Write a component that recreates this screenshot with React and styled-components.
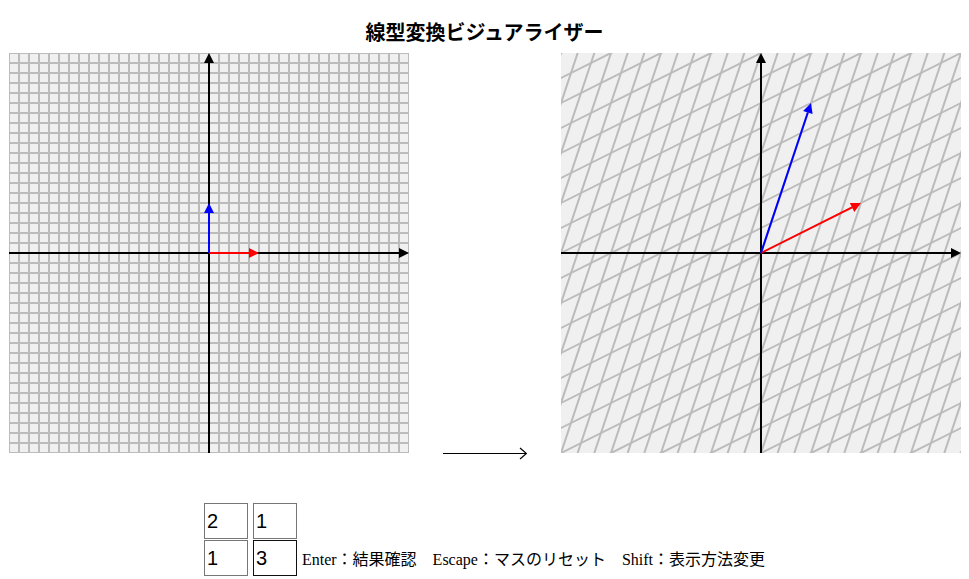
import styled, { createGlobalStyle } from 'styled-components';

const GlobalStyle = createGlobalStyle`
  body {
    margin: 8px;
    font-family: "Liberation Serif", "Noto Sans CJK JP", serif;
    color: #000;
    background: #fff;
  }
`;

const SIZE = 400;
const ORIGIN = SIZE / 2;
const UNIT = 50;
const STEP = 10;
const MATRIX = [[2, 1], [1, 3]];

const Title = styled.h1`
  margin: 10px 0 7px;
  font-family: "Noto Sans CJK JP", sans-serif;
  font-size: 20px;
  line-height: 28px;
  font-weight: 700;
  text-align: center;
`;

const Stage = styled.div`
  display: flex;
  align-items: flex-end;
  padding-left: 1px;
`;

const Plane = styled.svg`
  display: block;
  flex: none;
  width: ${SIZE}px;
  height: ${SIZE}px;
  background: #f0f0f0;
`;

const MapArrow = styled.svg`
  display: block;
  flex: none;
  width: 84px;
  height: 20px;
  margin: 0 34px -10px;
`;

const Footer = styled.div`
  display: flex;
  justify-content: center;
  align-items: last baseline;
  gap: 5px;
  margin-top: 50px;
`;

const MatrixGrid = styled.div`
  display: grid;
  grid-template-columns: repeat(2, 44px);
  column-gap: 5px;
  row-gap: 1px;
`;

const Cell = styled.input`
  box-sizing: border-box;
  width: 44px;
  height: 36px;
  margin: 0;
  padding: 0 2px;
  border: 1px solid ${(p) => (p.$active ? '#101010' : '#767676')};
  border-radius: 0;
  outline: none;
  background: #fff;
  font-family: "Liberation Sans", Arial, sans-serif;
  font-size: 20px;
  color: #000;
`;

const Hint = styled.span`
  font-size: 16px;
  white-space: nowrap;
`;

// 矢印の先端（三角形）
function head(x1, y1, x2, y2, len = 10, half = 5) {
  const dx = x2 - x1;
  const dy = y2 - y1;
  const d = Math.hypot(dx, dy);
  const ux = dx / d;
  const uy = dy / d;
  const bx = x2 - ux * len;
  const by = y2 - uy * len;
  return {
    base: [bx, by],
    points: `${x2},${y2} ${bx - uy * half},${by + ux * half} ${bx + uy * half},${by - ux * half}`,
  };
}

function Arrow({ x, y, color, width = 2 }) {
  const h = head(ORIGIN, ORIGIN, x, y);
  return (
    <g>
      <line x1={ORIGIN} y1={ORIGIN} x2={h.base[0]} y2={h.base[1]} stroke={color} strokeWidth={width} />
      <polygon points={h.points} fill={color} />
    </g>
  );
}

function toScreen(m, x, y) {
  const tx = m[0][0] * x + m[0][1] * y;
  const ty = m[1][0] * x + m[1][1] * y;
  return [ORIGIN + tx, ORIGIN - ty];
}

function PlaneView({ matrix }) {
  const lines = [];
  const n = matrix ? 60 : 20;
  const far = 3000;
  for (let k = -n; k <= n; k++) {
    const c = k * STEP;
    const [a1, b1] = toScreen(matrix || [[1, 0], [0, 1]], c, -far);
    const [a2, b2] = toScreen(matrix || [[1, 0], [0, 1]], c, far);
    const [c1, d1] = toScreen(matrix || [[1, 0], [0, 1]], -far, c);
    const [c2, d2] = toScreen(matrix || [[1, 0], [0, 1]], far, c);
    lines.push(<line key={`v${k}`} x1={a1} y1={b1} x2={a2} y2={b2} />);
    lines.push(<line key={`h${k}`} x1={c1} y1={d1} x2={c2} y2={d2} />);
  }
  const m = matrix || [[1, 0], [0, 1]];
  const [rx, ry] = toScreen(m, UNIT, 0);
  const [bx, by] = toScreen(m, 0, UNIT);

  return (
    <Plane viewBox={`0 0 ${SIZE} ${SIZE}`}>
      <g stroke="#bbbbbb" strokeWidth="2">{lines}</g>
      <Arrow x={SIZE} y={ORIGIN} color="#000" />
      <Arrow x={ORIGIN} y={0} color="#000" />
      <line x1={0} y1={ORIGIN} x2={ORIGIN} y2={ORIGIN} stroke="#000" strokeWidth="2" />
      <line x1={ORIGIN} y1={SIZE} x2={ORIGIN} y2={ORIGIN} stroke="#000" strokeWidth="2" />
      <Arrow x={rx} y={ry} color="#ff0000" />
      <Arrow x={bx} y={by} color="#0000ff" />
    </Plane>
  );
}

export default function App() {
  return (
    <>
      <GlobalStyle />
      <Title>線型変換ビジュアライザー</Title>
      <Stage>
        <PlaneView />
        <MapArrow viewBox="0 0 84 20">
          <line x1="0" y1="10.5" x2="83" y2="10.5" stroke="#000" strokeWidth="1" />
          <path d="M77 5 L83.5 10.5 L77 16" fill="none" stroke="#000" strokeWidth="1.2" />
        </MapArrow>
        <PlaneView matrix={MATRIX} />
      </Stage>
      <Footer>
        <MatrixGrid>
          <Cell defaultValue={MATRIX[0][0]} />
          <Cell defaultValue={MATRIX[0][1]} />
          <Cell defaultValue={MATRIX[1][0]} />
          <Cell defaultValue={MATRIX[1][1]} $active />
        </MatrixGrid>
        <Hint>Enter：結果確認　Escape：マスのリセット　Shift：表示方法変更</Hint>
      </Footer>
    </>
  );
}
